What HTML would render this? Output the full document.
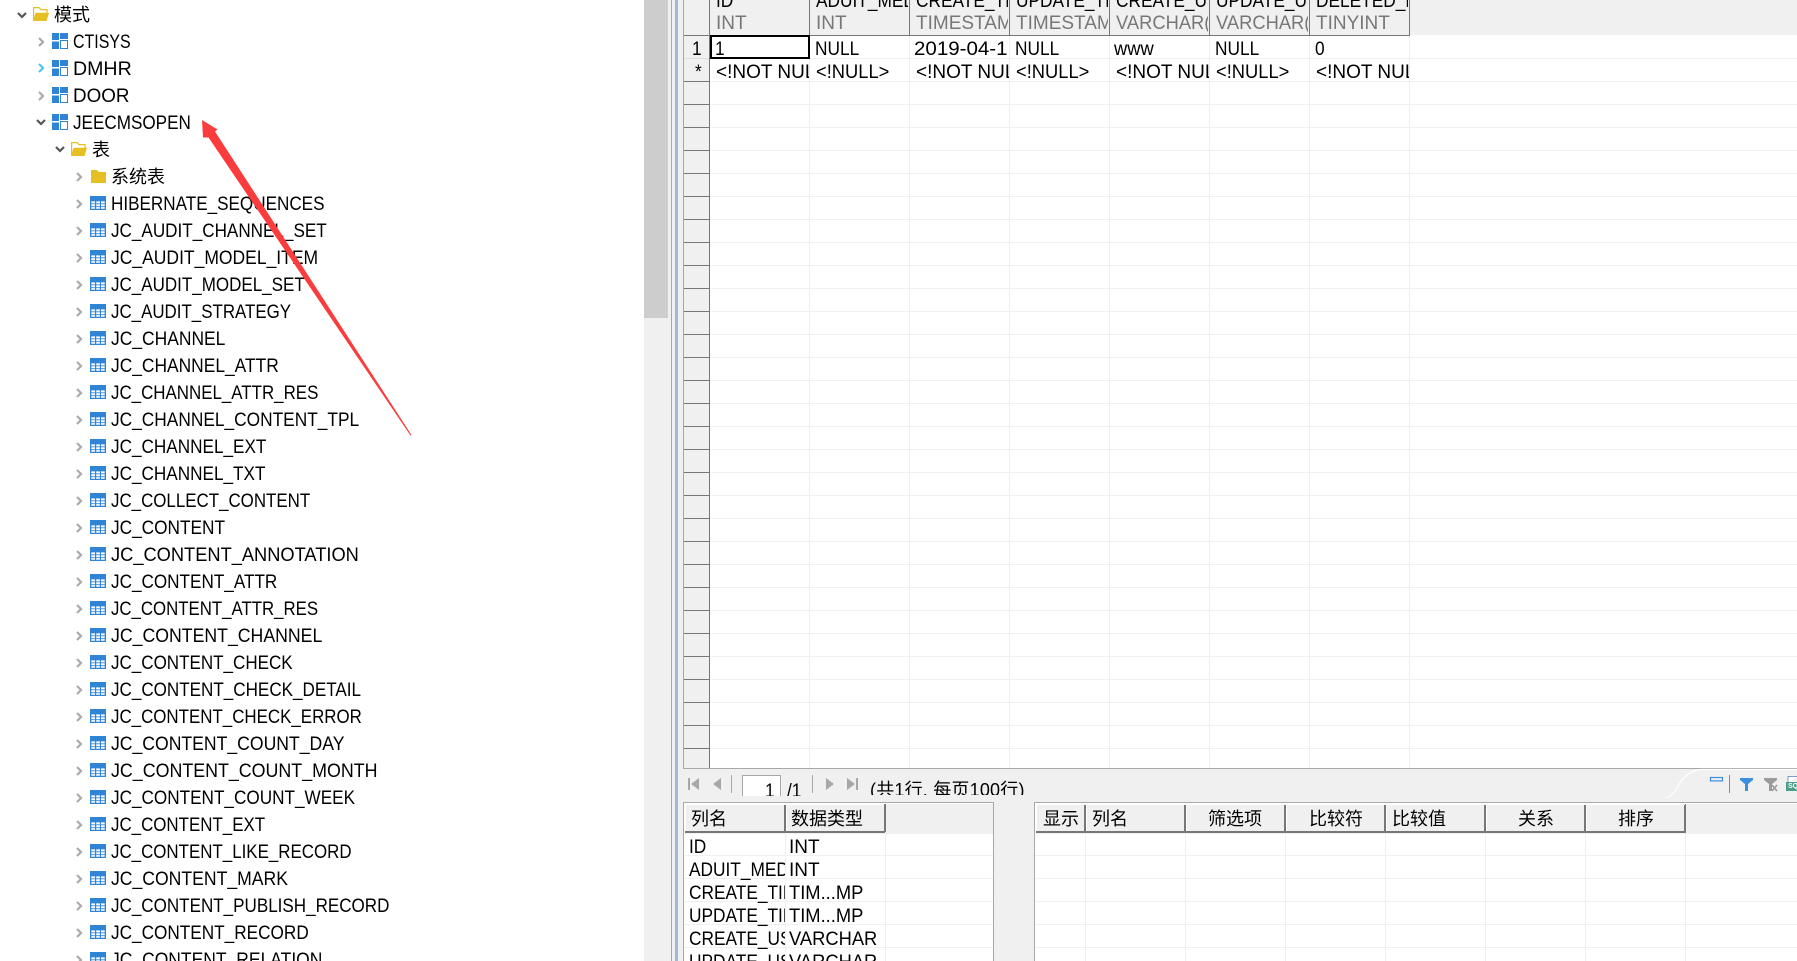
<!DOCTYPE html>
<html lang="zh"><head><meta charset="utf-8"><title>模式</title>
<style>
html,body{margin:0;padding:0;background:#fff}
#p{position:relative;width:1797px;height:961px;overflow:hidden;background:#fff;font-family:"Liberation Sans","Noto Sans CJK SC",sans-serif;color:#000}
svg{position:absolute;left:0;top:0}
.a{position:absolute;left:111px;margin-top:1px;white-space:nowrap;font-size:19px;line-height:27px;transform:scaleX(.89);transform-origin:0 0}
.z{position:absolute;margin-top:1px;white-space:nowrap;font-size:18px;line-height:27px}
.c{position:absolute;margin-top:1px;overflow:hidden;height:23px;line-height:23px;white-space:nowrap}
.c span{display:inline-block;font-size:19px;transform:scaleX(1);transform-origin:0 0}
.c span.n{transform:scaleX(.91)}
.c span.m{transform:scaleX(.965)}
.c span.w{transform:scaleX(1.08)}
.g span{color:#777}
</style></head><body><div id="p">

<svg width="1797" height="961" shape-rendering="crispEdges">
<rect x="644" y="0" width="24" height="961" fill="#f0f0f0"/>
<rect x="644" y="0" width="24" height="318" fill="#cdcdcd"/>
<rect x="668" y="0" width="16" height="961" fill="#f0f0f0"/>
<rect x="671" y="0" width="1" height="961" fill="#a8a8a8"/>
<rect x="675" y="0" width="3" height="961" fill="#9db8d8"/>
<rect x="683" y="0" width="1" height="769" fill="#a8a8a8"/>
<rect x="684" y="0" width="26" height="768" fill="#f0f0f0"/>
<rect x="710" y="0" width="1087" height="35" fill="#f0f0f0"/>
<rect x="710" y="35" width="1087" height="733" fill="#fff"/>
<rect x="684" y="768" width="1113" height="1" fill="#a8a8a8"/>
<rect x="684" y="769" width="1113" height="192" fill="#f0f0f0"/>
<path stroke="#f0f0f0" fill="none" d="M710 58.5H1797M710 81.5H1797M710 104.5H1797M710 127.5H1797M710 150.5H1797M710 173.5H1797M710 196.5H1797M710 219.5H1797M710 242.5H1797M710 265.5H1797M710 288.5H1797M710 311.5H1797M710 334.5H1797M710 357.5H1797M710 380.5H1797M710 403.5H1797M710 426.5H1797M710 449.5H1797M710 472.5H1797M710 495.5H1797M710 518.5H1797M710 541.5H1797M710 564.5H1797M710 587.5H1797M710 610.5H1797M710 633.5H1797M710 656.5H1797M710 679.5H1797M710 702.5H1797M710 725.5H1797M710 748.5H1797M809.5 35V768M909.5 35V768M1009.5 35V768M1109.5 35V768M1209.5 35V768M1309.5 35V768M1409.5 35V768"/>
<path stroke="#777" fill="none" d="M684 35.5H1410M684 81.5H709M684 104.5H709M684 127.5H709M684 150.5H709M684 173.5H709M684 196.5H709M684 219.5H709M684 242.5H709M684 265.5H709M684 288.5H709M684 311.5H709M684 334.5H709M684 357.5H709M684 380.5H709M684 403.5H709M684 426.5H709M684 449.5H709M684 472.5H709M684 495.5H709M684 518.5H709M684 541.5H709M684 564.5H709M684 587.5H709M684 610.5H709M684 633.5H709M684 656.5H709M684 679.5H709M684 702.5H709M684 725.5H709M684 748.5H709M709.5 0V768M809.5 0V35M909.5 0V35M1009.5 0V35M1109.5 0V35M1209.5 0V35M1309.5 0V35M1409.5 0V35"/>
<path stroke="#ddd" fill="none" d="M684 58.5H709"/>
<rect x="711" y="36" width="98" height="22" fill="none" stroke="#000" stroke-width="2"/>

<!-- lower panels -->
<rect x="683.5" y="802.5" width="310" height="170" fill="#fff" stroke="#a8a8a8"/>
<rect x="1034.5" y="802.5" width="770" height="170" fill="#fff" stroke="#a8a8a8"/>
<rect x="685" y="804" width="308" height="30" fill="#f0f0f0"/>
<rect x="1036" y="804" width="761" height="30" fill="#f0f0f0"/>
<path stroke="#f0f0f0" fill="none" d="M685 855.5H993M685 878.5H993M685 901.5H993M685 924.5H993M685 947.5H993M785.5 834V961M885.5 834V961M1035 855.5H1797M1035 878.5H1797M1035 901.5H1797M1035 924.5H1797M1035 947.5H1797M1085.5 834V961M1185.5 834V961M1285.5 834V961M1385.5 834V961M1485.5 834V961M1585.5 834V961M1685.5 834V961"/>
<path stroke="#777" stroke-width="2" fill="none" d="M685 832H885M785 804V832M885 804V832M1036 832H1686M1085 804V832M1185 804V832M1285 804V832M1385 804V832M1485 804V832M1585 804V832M1685 804V832"/>
<path stroke="#fff" fill="none" d="M685 804.5H884M786.5 804V831M685.5 804V831M1036 804.5H1685M1036.5 804V831M1086.5 804V831M1186.5 804V831M1286.5 804V831M1386.5 804V831M1486.5 804V831M1586.5 804V831"/>

<!-- toolbar -->
<rect x="742" y="775" width="39" height="21" fill="#fff"/>
<path stroke="#a8a8a8" fill="none" d="M742.5 796V775.5H780.5V796"/>
<path stroke="#a8a8a8" fill="none" d="M731.5 775V793M812.5 775V793"/>
<path fill="#a8a8a8" d="M688 778h2v12h-2zM691 784l8-6v12zM721 778v12l-8-6zM826 778l8 6-8 6zM847 778l8 6-8 6zM856 778h2v12h-2z"/>
<path stroke="#888" fill="none" d="M1729.5 775V793"/>
</svg>

<svg width="1797" height="961">
<defs>
<g id="ch"><path d="M1 1l4 4-4 4" fill="none" stroke="#aaa" stroke-width="2.2"/></g>
<g id="op"><path d="M1 1l4 4 4-4" fill="none" stroke="#555" stroke-width="2.2"/></g>
<g id="tb"><rect width="16" height="14" fill="#2f84d6"/><path fill="#fff" d="M1.3 5.4h3.7v2H1.3zM6.2 5.4h3.7v2H6.2zM11 5.4h3.7v2H11zM1.3 8.3h3.7v2H1.3zM6.2 8.3h3.7v2H6.2zM11 8.3h3.7v2H11zM1.3 11.1h3.7v1.7H1.3zM6.2 11.1h3.7v1.7H6.2zM11 11.1h3.7v1.7H11z"/></g>
<g id="sc"><path fill="#2f84d6" d="M0 0h7v7H0zM0 8.5h7v7.5H0zM8 0h8v6H8z"/><rect x="8.5" y="7.5" width="7" height="8" fill="#fff" stroke="#2f84d6" stroke-width="1"/></g>
<g id="fo"><path d="M.6 13V.6h5.4l2 2h6V6" fill="#fff" stroke="#e6bf23" stroke-width="1.2"/><path d="M0 14L2.6 5.8H16L13.5 14z" fill="#e6bf23"/></g>
</defs>
<use href="#op" x="17" y="12"/><use href="#fo" x="33" y="7"/>
<use href="#ch" x="38" y="37"/><use href="#sc" x="52" y="33"/>
<path d="M39 64l4 4-4 4" fill="none" stroke="#4cc5f2" stroke-width="2.2"/><use href="#sc" x="52" y="60"/>
<use href="#ch" x="38" y="91"/><use href="#sc" x="52" y="87"/>
<use href="#op" x="36" y="119"/><use href="#sc" x="52" y="114"/>
<use href="#op" x="55" y="146"/><use href="#fo" x="71" y="142"/>
<use href="#ch" x="76" y="172"/><path d="M91 170h6l2 2h7v11H91z" fill="#e6bf23"/>
<use href="#ch" x="76" y="199"/><use href="#tb" x="90" y="196"/>
<use href="#ch" x="76" y="226"/><use href="#tb" x="90" y="223"/>
<use href="#ch" x="76" y="253"/><use href="#tb" x="90" y="250"/>
<use href="#ch" x="76" y="280"/><use href="#tb" x="90" y="277"/>
<use href="#ch" x="76" y="307"/><use href="#tb" x="90" y="304"/>
<use href="#ch" x="76" y="334"/><use href="#tb" x="90" y="331"/>
<use href="#ch" x="76" y="361"/><use href="#tb" x="90" y="358"/>
<use href="#ch" x="76" y="388"/><use href="#tb" x="90" y="385"/>
<use href="#ch" x="76" y="415"/><use href="#tb" x="90" y="412"/>
<use href="#ch" x="76" y="442"/><use href="#tb" x="90" y="439"/>
<use href="#ch" x="76" y="469"/><use href="#tb" x="90" y="466"/>
<use href="#ch" x="76" y="496"/><use href="#tb" x="90" y="493"/>
<use href="#ch" x="76" y="523"/><use href="#tb" x="90" y="520"/>
<use href="#ch" x="76" y="550"/><use href="#tb" x="90" y="547"/>
<use href="#ch" x="76" y="577"/><use href="#tb" x="90" y="574"/>
<use href="#ch" x="76" y="604"/><use href="#tb" x="90" y="601"/>
<use href="#ch" x="76" y="631"/><use href="#tb" x="90" y="628"/>
<use href="#ch" x="76" y="658"/><use href="#tb" x="90" y="655"/>
<use href="#ch" x="76" y="685"/><use href="#tb" x="90" y="682"/>
<use href="#ch" x="76" y="712"/><use href="#tb" x="90" y="709"/>
<use href="#ch" x="76" y="739"/><use href="#tb" x="90" y="736"/>
<use href="#ch" x="76" y="766"/><use href="#tb" x="90" y="763"/>
<use href="#ch" x="76" y="793"/><use href="#tb" x="90" y="790"/>
<use href="#ch" x="76" y="820"/><use href="#tb" x="90" y="817"/>
<use href="#ch" x="76" y="847"/><use href="#tb" x="90" y="844"/>
<use href="#ch" x="76" y="874"/><use href="#tb" x="90" y="871"/>
<use href="#ch" x="76" y="901"/><use href="#tb" x="90" y="898"/>
<use href="#ch" x="76" y="928"/><use href="#tb" x="90" y="925"/>
<use href="#ch" x="76" y="955"/><use href="#tb" x="90" y="952"/>
<!-- top-right toolbar icons -->
<path d="M1665 797.5Q1672 797 1677 788Q1685 772 1700 769.5H1797" fill="none" stroke="#fff" stroke-width="1.2"/>
<rect x="1710.5" y="777.5" width="12" height="3.4" fill="none" stroke="#3a8fe0" stroke-width="1.2"/>
<path d="M1740 778h13v2l-5 4v7h-3v-7l-5-4z" fill="#3a8fe0"/>
<path d="M1764 778h13v2l-5 4v7h-3v-7l-5-4z" fill="#9a9a9a"/><path d="M1772 785l5 6m0-6l-5 6" stroke="#9a9a9a" stroke-width="1.6"/>
<path d="M1788 784v-7.5h9" fill="#fff" stroke="#7a9cc8" stroke-width="1"/><rect x="1786" y="782" width="11" height="9" fill="#4a9d8a"/>
</svg>

<!-- tree text -->
<div class="z" style="left:54px;top:1px">模式</div>
<div class="a" style="left:73px;top:28px;transform:scaleX(.84)">CTISYS</div>
<div class="a" style="left:73px;top:55px;transform:scaleX(1.03)">DMHR</div>
<div class="a" style="left:73px;top:82px;transform:scaleX(.99)">DOOR</div>
<div class="a" style="left:73px;top:109px;transform:scaleX(.9)">JEECMSOPEN</div>
<div class="z" style="left:92px;top:136px">表</div>
<div class="z" style="left:111px;top:163px">系统表</div>
<div class="a" style="top:190px;transform:scaleX(.9)">HIBERNATE_SEQUENCES</div>
<div class="a" style="top:217px;transform:scaleX(.9)">JC_AUDIT_CHANNEL_SET</div>
<div class="a" style="top:244px;transform:scaleX(.921)">JC_AUDIT_MODEL_ITEM</div>
<div class="a" style="top:271px;transform:scaleX(.895)">JC_AUDIT_MODEL_SET</div>
<div class="a" style="top:298px">JC_AUDIT_STRATEGY</div>
<div class="a" style="top:325px;transform:scaleX(.918)">JC_CHANNEL</div>
<div class="a" style="top:352px;transform:scaleX(.915)">JC_CHANNEL_ATTR</div>
<div class="a" style="top:379px">JC_CHANNEL_ATTR_RES</div>
<div class="a" style="top:406px;transform:scaleX(.911)">JC_CHANNEL_CONTENT_TPL</div>
<div class="a" style="top:433px;transform:scaleX(.903)">JC_CHANNEL_EXT</div>
<div class="a" style="top:460px;transform:scaleX(.903)">JC_CHANNEL_TXT</div>
<div class="a" style="top:487px">JC_COLLECT_CONTENT</div>
<div class="a" style="top:514px;transform:scaleX(.908)">JC_CONTENT</div>
<div class="a" style="top:541px;transform:scaleX(.961)">JC_CONTENT_ANNOTATION</div>
<div class="a" style="top:568px;transform:scaleX(.902)">JC_CONTENT_ATTR</div>
<div class="a" style="top:595px;transform:scaleX(.885)">JC_CONTENT_ATTR_RES</div>
<div class="a" style="top:622px;transform:scaleX(.931)">JC_CONTENT_CHANNEL</div>
<div class="a" style="top:649px;transform:scaleX(.896)">JC_CONTENT_CHECK</div>
<div class="a" style="top:676px;transform:scaleX(.898)">JC_CONTENT_CHECK_DETAIL</div>
<div class="a" style="top:703px">JC_CONTENT_CHECK_ERROR</div>
<div class="a" style="top:730px;transform:scaleX(.9265)">JC_CONTENT_COUNT_DAY</div>
<div class="a" style="top:757px;transform:scaleX(.9385)">JC_CONTENT_COUNT_MONTH</div>
<div class="a" style="top:784px;transform:scaleX(.903)">JC_CONTENT_COUNT_WEEK</div>
<div class="a" style="top:811px">JC_CONTENT_EXT</div>
<div class="a" style="top:838px">JC_CONTENT_LIKE_RECORD</div>
<div class="a" style="top:865px;transform:scaleX(.926)">JC_CONTENT_MARK</div>
<div class="a" style="top:892px;transform:scaleX(.897)">JC_CONTENT_PUBLISH_RECORD</div>
<div class="a" style="top:919px;transform:scaleX(.905)">JC_CONTENT_RECORD</div>
<div class="a" style="top:946px;transform:scaleX(.92)">JC_CONTENT_RELATION</div>

<!-- grid header -->
<div class="c" style="left:716px;top:-11px;width:92px"><span class="n">ID</span></div>
<div class="c" style="left:816px;top:-11px;width:92px"><span class="n">ADUIT_MEDIA</span></div>
<div class="c" style="left:916px;top:-11px;width:92px"><span class="n">CREATE_TIME</span></div>
<div class="c" style="left:1016px;top:-11px;width:92px"><span class="n">UPDATE_TIME</span></div>
<div class="c" style="left:1116px;top:-11px;width:92px"><span class="n">CREATE_USER</span></div>
<div class="c" style="left:1216px;top:-11px;width:92px"><span class="n">UPDATE_USER</span></div>
<div class="c" style="left:1316px;top:-11px;width:92px"><span class="n">DELETED_FLAG</span></div>
<div class="c g" style="left:716px;top:11px;width:92px"><span>INT</span></div>
<div class="c g" style="left:816px;top:11px;width:92px"><span>INT</span></div>
<div class="c g" style="left:916px;top:11px;width:92px"><span>TIMESTAMP</span></div>
<div class="c g" style="left:1016px;top:11px;width:92px"><span>TIMESTAMP</span></div>
<div class="c g" style="left:1116px;top:11px;width:92px"><span class="m">VARCHAR(</span></div>
<div class="c g" style="left:1216px;top:11px;width:92px"><span class="m">VARCHAR(</span></div>
<div class="c g" style="left:1316px;top:11px;width:92px"><span>TINYINT</span></div>

<!-- grid rows -->
<div class="c" style="left:692px;top:37px;width:16px"><span class="n">1</span></div>
<div class="c" style="left:695px;top:60px;width:12px"><span class="n">*</span></div>
<div class="c" style="left:715px;top:37px;width:92px"><span class="n">1</span></div>
<div class="c" style="left:815px;top:37px;width:93px"><span class="n">NULL</span></div>
<div class="c" style="left:914px;top:37px;width:95px"><span class="w">2019-04-1</span></div>
<div class="c" style="left:1015px;top:37px;width:93px"><span class="n">NULL</span></div>
<div class="c" style="left:1114px;top:37px;width:93px"><span class="m">www</span></div>
<div class="c" style="left:1215px;top:37px;width:93px"><span class="n">NULL</span></div>
<div class="c" style="left:1315px;top:37px;width:93px"><span class="n">0</span></div>
<div class="c" style="left:716px;top:60px;width:93px"><span>&lt;!NOT NULL&gt;</span></div>
<div class="c" style="left:816px;top:60px;width:93px"><span class="m">&lt;!NULL&gt;</span></div>
<div class="c" style="left:916px;top:60px;width:93px"><span>&lt;!NOT NULL&gt;</span></div>
<div class="c" style="left:1016px;top:60px;width:93px"><span class="m">&lt;!NULL&gt;</span></div>
<div class="c" style="left:1116px;top:60px;width:93px"><span>&lt;!NOT NULL&gt;</span></div>
<div class="c" style="left:1216px;top:60px;width:93px"><span class="m">&lt;!NULL&gt;</span></div>
<div class="c" style="left:1316px;top:60px;width:93px"><span>&lt;!NOT NULL&gt;</span></div>

<!-- pager -->
<div class="c" style="left:765px;top:779px;width:14px;height:16px"><span class="n">1</span></div>
<div class="c" style="left:787px;top:779px;width:20px;height:16px"><span class="n">/1</span></div>
<div style="position:absolute;left:870px;top:776px;width:160px;height:19px;overflow:hidden"><div style="font-size:18px;line-height:29px;white-space:nowrap;letter-spacing:.2px">(共1行, 每页100行)</div></div>
<div style="position:absolute;left:1788px;top:782px;font-size:7px;line-height:9px;color:#fff;font-weight:bold">SQL</div>

<!-- left lower panel -->
<div class="z" style="left:691px;top:805px">列名</div>
<div class="z" style="left:791px;top:805px">数据类型</div>
<div class="c" style="left:689px;top:835px;width:96px"><span class="n">ID</span></div>
<div class="c" style="left:689px;top:858px;width:96px"><span class="n">ADUIT_MEDIA</span></div>
<div class="c" style="left:689px;top:881px;width:96px"><span class="n">CREATE_TIME</span></div>
<div class="c" style="left:689px;top:904px;width:96px"><span class="n">UPDATE_TIME</span></div>
<div class="c" style="left:689px;top:927px;width:96px"><span class="n">CREATE_USER</span></div>
<div class="c" style="left:689px;top:950px;width:96px"><span class="n">UPDATE_USER</span></div>
<div class="c" style="left:789px;top:835px;width:96px"><span>INT</span></div>
<div class="c" style="left:789px;top:858px;width:96px"><span>INT</span></div>
<div class="c" style="left:789px;top:881px;width:96px"><span class="m">TIM...MP</span></div>
<div class="c" style="left:789px;top:904px;width:96px"><span class="m">TIM...MP</span></div>
<div class="c" style="left:789px;top:927px;width:96px"><span class="m">VARCHAR</span></div>
<div class="c" style="left:789px;top:950px;width:96px"><span class="m">VARCHAR</span></div>

<!-- right lower panel -->
<div class="z" style="left:1043px;top:805px">显示</div>
<div class="z" style="left:1092px;top:805px">列名</div>
<div class="z" style="left:1208px;top:805px">筛选项</div>
<div class="z" style="left:1309px;top:805px">比较符</div>
<div class="z" style="left:1392px;top:805px">比较值</div>
<div class="z" style="left:1518px;top:805px">关系</div>
<div class="z" style="left:1618px;top:805px">排序</div>

<!-- arrow -->
<svg width="1797" height="961"><path d="M202 120L217.5 129.5L215 131.5L411.5 435L410.5 435.5L208.5 137.5L203 137.5z" fill="#fb3c3c"/></svg>
</div></body></html>
